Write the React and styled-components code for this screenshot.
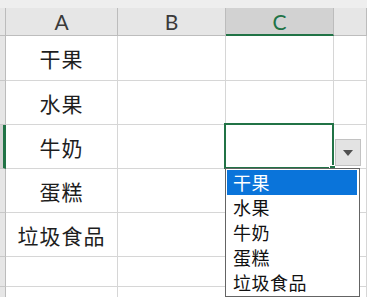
import React from "react";
import styled, { createGlobalStyle } from "styled-components";

const Global = createGlobalStyle`
  html, body { margin: 0; padding: 0; background: #ffffff; }
  body { width: 367px; height: 297px; overflow: hidden; }
  #root { width: 367px; height: 297px; }
`;

const Page = styled.div`
  width: 367px;
  height: 297px;
  overflow: hidden;
  background: #ffffff;
  display: flex;
  flex-direction: column;
`;

const TopStrip = styled.div`
  height: 8px;
  flex: none;
  background: #eeeeee;
`;

const Sheet = styled.div`
  display: grid;
  grid-template-columns: 6px 112px 108px 108px 1fr;
  grid-template-rows: 28px 45px 44px 44px 44px 44px 30px 30px;
`;

const HeaderCell = styled.div`
  box-sizing: border-box;
  background: ${(p) => (p.$active ? "#d2d2d2" : "#e6e6e6")};
  border-right: 1px solid #bcbcbc;
  border-bottom: ${(p) => (p.$active ? "2px solid #217346" : "1px solid #bdbdbd")};
  color: ${(p) => (p.$active ? "#217346" : "#3a3a3a")};
  font-family: Lato, "Liberation Sans", sans-serif;
  font-size: 21px;
  display: flex;
  align-items: flex-end;
  justify-content: center;
  padding-bottom: ${(p) => (p.$active ? "0px" : "1px")};
  line-height: 24px;
`;

const Corner = styled.div`
  box-sizing: border-box;
  background: #e6e6e6;
  border-right: 1px solid #bcbcbc;
  border-bottom: 1px solid #bdbdbd;
`;

const RowHeader = styled.div`
  box-sizing: border-box;
  background: ${(p) => (p.$active ? "#d2d2d2" : "#e6e6e6")};
  border-right: ${(p) => (p.$active ? "3px solid #217346" : "1px solid #bcbcbc")};
  border-bottom: 1px solid #c8c8c8;
`;

const Cell = styled.div`
  box-sizing: border-box;
  position: relative;
  border-right: 1px solid #d6d6d6;
  border-bottom: 1px solid #d6d6d6;
  display: flex;
  align-items: center;
  justify-content: center;
  font-family: "Noto Sans CJK SC", "Noto Sans", sans-serif;
  font-size: 21px;
  letter-spacing: 1px;
  color: #1e1e1e;
`;

const ActiveFrame = styled.div`
  position: absolute;
  top: -2px;
  left: -2px;
  right: -1px;
  bottom: -1px;
  border: 2px solid #217346;
  pointer-events: none;
`;

const FillHandle = styled.div`
  position: absolute;
  right: -3px;
  bottom: -4px;
  width: 5px;
  height: 5px;
  background: #217346;
  border: 1px solid #ffffff;
`;

const DropButton = styled.div`
  position: absolute;
  left: 109px;
  top: 14px;
  width: 26px;
  height: 27px;
  box-sizing: border-box;
  background: #e3e3e3;
  border: 1px solid #c2c2c2;
  display: flex;
  align-items: center;
  justify-content: center;
`;

const List = styled.ul`
  position: absolute;
  left: -1px;
  top: 43px;
  width: 135px;
  height: 129px;
  box-sizing: border-box;
  margin: 0;
  padding: 1px 2px 1px 1px;
  list-style: none;
  background: #ffffff;
  border: 1px solid #646464;
  z-index: 2;
`;

const Item = styled.li`
  height: 25px;
  line-height: 24px;
  padding-left: 6px;
  font-family: "Noto Sans CJK SC", "Noto Sans", sans-serif;
  font-size: 18px;
  letter-spacing: 0.5px;
  text-align: left;
  color: ${(p) => (p.$selected ? "#ffffff" : "#111111")};
  background: ${(p) => (p.$selected ? "#0a74da" : "transparent")};
`;

const values = ["干果", "水果", "牛奶", "蛋糕", "垃圾食品", "", ""];
const cols = ["A", "B", "C"];

export default function App() {
  return (
    <Page>
      <Global />
      <TopStrip />
      <Sheet>
        <Corner />
        {cols.map((c) => (
          <HeaderCell key={c} $active={c === "C"}>
            {c}
          </HeaderCell>
        ))}
        <HeaderCell />
        {values.map((v, i) => (
          <React.Fragment key={i}>
            <RowHeader $active={i === 2} />
            <Cell>{v}</Cell>
            <Cell />
            <Cell>
              {i === 2 && (
                <>
                  <ActiveFrame />
                  <FillHandle />
                  <DropButton>
                    <svg width="10" height="6" viewBox="0 0 10 6">
                      <path d="M0 0 L10 0 L5 6 Z" fill="#505050" />
                    </svg>
                  </DropButton>
                  <List>
                    {values.slice(0, 5).map((t, j) => (
                      <Item key={t} $selected={j === 0}>
                        {t}
                      </Item>
                    ))}
                  </List>
                </>
              )}
            </Cell>
            <Cell />
          </React.Fragment>
        ))}
      </Sheet>
    </Page>
  );
}
